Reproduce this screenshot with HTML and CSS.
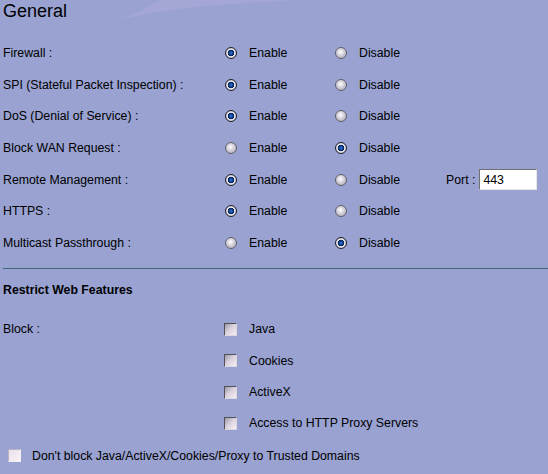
FILE: index.html
```html
<!DOCTYPE html>
<html lang="en">
<head>
    <meta charset="UTF-8">
    <title>Firewall - General</title>
    <link rel="stylesheet" href="styles.css">
</head>
<body>
    <svg class="swoosh" width="548" height="30" viewBox="0 0 548 30">
        <path d="M120 20 C160 10 210 4 300 0 L160 0 C150 6 138 12 120 20 Z" fill="#a4a6d6"/>
    </svg>

    <h1 class="title">General</h1>

    <div class="settings">
        <div class="row">
            <span class="label">Firewall :</span>
            <label class="opt"><input type="radio" class="radio" name="fw" checked>Enable</label>
            <label class="opt"><input type="radio" class="radio" name="fw">Disable</label>
        </div>
        <div class="row">
            <span class="label">SPI (Stateful Packet Inspection) :</span>
            <label class="opt"><input type="radio" class="radio" name="spi" checked>Enable</label>
            <label class="opt"><input type="radio" class="radio" name="spi">Disable</label>
        </div>
        <div class="row">
            <span class="label">DoS (Denial of Service) :</span>
            <label class="opt"><input type="radio" class="radio" name="dos" checked>Enable</label>
            <label class="opt"><input type="radio" class="radio" name="dos">Disable</label>
        </div>
        <div class="row">
            <span class="label">Block WAN Request :</span>
            <label class="opt"><input type="radio" class="radio" name="wan">Enable</label>
            <label class="opt"><input type="radio" class="radio" name="wan" checked>Disable</label>
        </div>
        <div class="row">
            <span class="label">Remote Management :</span>
            <label class="opt"><input type="radio" class="radio" name="rm" checked>Enable</label>
            <label class="opt"><input type="radio" class="radio" name="rm">Disable</label>
            <span class="port">Port :<input type="text" class="port-input" value="443"></span>
        </div>
        <div class="row">
            <span class="label">HTTPS :</span>
            <label class="opt"><input type="radio" class="radio" name="https" checked>Enable</label>
            <label class="opt"><input type="radio" class="radio" name="https">Disable</label>
        </div>
        <div class="row">
            <span class="label">Multicast Passthrough :</span>
            <label class="opt"><input type="radio" class="radio" name="mc">Enable</label>
            <label class="opt"><input type="radio" class="radio" name="mc" checked>Disable</label>
        </div>
    </div>

    <hr class="divider">

    <h2 class="subtitle">Restrict Web Features</h2>

    <div class="blocks">
        <div class="row">
            <span class="label">Block :</span>
            <label class="opt wide"><input type="checkbox" class="check">Java</label>
        </div>
        <div class="row">
            <span class="label"></span>
            <label class="opt wide"><input type="checkbox" class="check">Cookies</label>
        </div>
        <div class="row">
            <span class="label"></span>
            <label class="opt wide"><input type="checkbox" class="check">ActiveX</label>
        </div>
        <div class="row">
            <span class="label"></span>
            <label class="opt wide"><input type="checkbox" class="check">Access to HTTP Proxy Servers</label>
        </div>
    </div>

    <label class="trusted"><input type="checkbox" class="check light">Don't block Java/ActiveX/Cookies/Proxy to Trusted Domains</label>
</body>
</html>
```

FILE: styles.css
```css
body {
    margin: 0;
    padding: 0 0 0 3px;
    background: #99a2d1;
    font-family: "Liberation Sans", Arial, sans-serif;
    font-size: 12.3px;
    color: #000;
    position: relative;
    min-height: 474px;
    box-sizing: border-box;
}

.swoosh {
    position: absolute;
    top: 0;
    left: 0;
    z-index: 0;
}

.title {
    position: relative;
    margin: 0 0 15px;
    font-size: 18px;
    font-weight: normal;
    line-height: 22px;
}

.row {
    display: flex;
    align-items: center;
    height: 31.7px;
}

.blocks .row {
    height: 31.3px;
}

.label {
    width: 221px;
    flex: none;
}

.opt {
    display: flex;
    align-items: center;
    gap: 12px;
    width: 110px;
    flex: none;
}

.opt + .opt {
    width: 112px;
}

.opt.wide {
    width: auto;
}

.radio {
    -webkit-appearance: none;
    appearance: none;
    width: 12px;
    height: 12px;
    margin: 0 0 0 1px;
    border-radius: 50%;
    border: 1px solid #62626c;
    background: radial-gradient(circle at 45% 40%, #ffffff 0, #dcd8e2 35%, #a09cab 100%);
    box-sizing: border-box;
}

.radio:checked {
    border-color: #202028;
    background: radial-gradient(circle at 50% 50%, #3a78d0 0, #0c3c90 2px, #06204c 3px, #f0f0f4 3.6px, #c8c8d0 5px, #9090a0 6px);
}

.port {
    display: flex;
    align-items: center;
    gap: 4px;
}

.port-input {
    width: 58px;
    height: 21px;
    box-sizing: border-box;
    padding: 1px 3px 0;
    border: 1px solid;
    border-color: #707070 #e8e8e8 #e8e8e8 #707070;
    background: #fff;
    font-family: inherit;
    font-size: 12.3px;
}

.divider {
    margin: 9px 0 0;
    border: 0;
    height: 1px;
    background: #3d6878;
}

.subtitle {
    margin: 14px 0 17px;
    font-size: 12.3px;
    line-height: 14px;
}

.check {
    -webkit-appearance: none;
    appearance: none;
    width: 13px;
    height: 13px;
    margin: 0;
    box-sizing: border-box;
    border: 1px solid;
    border-color: #505058 #d8d8e0 #d8d8e0 #505058;
    background: linear-gradient(135deg, #9c98a8 0, #d8d0dc 45%, #f8eef4 100%);
}

.check.light {
    border-color: #b8b4c4 #f0f0f4 #f0f0f4 #b8b4c4;
    background: linear-gradient(135deg, #e8e0ec 0, #fbf2f6 100%);
}

.trusted {
    display: flex;
    align-items: center;
    gap: 11px;
    margin: 1px 0 0 5px;
    height: 31px;
}
```
